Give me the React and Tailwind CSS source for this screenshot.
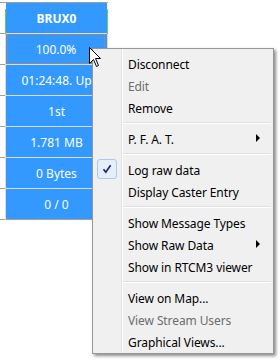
import React from 'react';

const cells = ['BRUX0', '100.0%', '01:24:48. Up', '1st', '1.781 MB', '0 Bytes', '0 / 0'];

const menu = [
  { label: 'Disconnect' },
  { label: 'Edit', disabled: true },
  { label: 'Remove' },
  'sep',
  { label: 'P. F. A. T.', sub: true },
  'sep',
  { label: 'Log raw data', checked: true },
  { label: 'Display Caster Entry' },
  'sep',
  { label: 'Show Message Types' },
  { label: 'Show Raw Data', sub: true },
  { label: 'Show in RTCM3 viewer' },
  'sep',
  { label: 'View on Map...' },
  { label: 'View Stream Users', disabled: true },
  { label: 'Graphical Views...' },
];

const StreamColumn = () => (
  <div className="pt-[2px]">
    <div className="w-[108px] border-t border-[#a0a0a0]">
      {cells.map((text, i) => {
        const last = i === cells.length - 1;
        return (
          <div key={i} className="flex h-[31px]">
            <div className="w-[5px] border-b border-[#a0a0a0]" />
            {i === 0 ? (
              <div className="w-px bg-[linear-gradient(to_bottom,transparent_6px,#5fd35f_6px)]" />
            ) : (
              <div className="w-px bg-[#dcdcdc]" />
            )}
            <div
              className={`w-[101px] bg-[#3399ff] flex text-white ${
                last ? 'border-b border-[#a0a0a0]' : 'border-b border-[#dcdcdc]'
              }`}
            >
              {i === 1 ? (
                <div className="flex-1 ml-[1px] mr-[2px] border border-dotted border-[#f07a1e] flex items-center justify-center pt-[1px]">
                  {text}
                </div>
              ) : (
                <div className={`flex-1 flex items-center justify-center pt-[1px] ${i === 0 ? 'font-bold' : ''}`}>
                  {text}
                </div>
              )}
            </div>
            {i === 0 ? (
              <div className="w-px bg-[linear-gradient(to_bottom,transparent_6px,#5fd35f_6px)]" />
            ) : (
              <div className="w-px bg-[#dcdcdc]" />
            )}
          </div>
        );
      })}
    </div>
  </div>
);

const Check = () => (
  <svg width="10" height="10" viewBox="0 0 10 10">
    <path d="M1.5 5.2 L3.8 8.2 L8.6 1.2" fill="none" stroke="#13217a" strokeWidth="1.6" strokeLinejoin="miter" />
  </svg>
);

const ContextMenu = () => (
  <div className="absolute left-[92px] top-[48px] w-[182px] border border-[#979797] shadow-[2px_2px_3px_rgba(0,0,0,0.45)] bg-[linear-gradient(to_right,#f0f0f0_28px,#e2e3e3_28px,#e2e3e3_29px,#ffffff_29px,#ffffff_30px,#f0f0f0_30px)] pt-[3px] pb-[1px]">
    {menu.map((item, i) =>
      item === 'sep' ? (
        <div key={i} className="h-[9px] flex flex-col justify-center pl-[30px] pr-[2px]">
          <div className="h-px bg-[#e0e0e0]" />
          <div className="h-px bg-white" />
        </div>
      ) : (
        <div
          key={i}
          className={`flex h-[22px] items-center ${item.disabled ? 'text-[#6d6d6d]' : 'text-black'}`}
        >
          <div className="w-[35px] h-full flex items-center pl-[4px]">
            {item.checked && (
              <div className="w-[20px] h-[20px] rounded-[3px] border border-[#a9c9ef] bg-[#e6eefa] flex items-center justify-center">
                <Check />
              </div>
            )}
          </div>
          <div className="flex-1 pt-[3px] tracking-[-0.1px]">{item.label}</div>
          {item.sub && (
            <div className="mr-[13px] w-0 h-0 border-y-[4px] border-y-transparent border-l-[4px] border-l-black" />
          )}
        </div>
      )
    )}
  </div>
);

const Cursor = () => (
  <svg className="absolute left-[89px] top-[47px]" width="13" height="21" viewBox="0 0 13 21">
    <path
      d="M0.5 0.5 L0.5 16.5 L4.5 12.5 L7.5 19.5 L9.5 18.5 L6.5 11.5 L11.5 11.5 Z"
      fill="#ffffff"
      stroke="#000000"
      strokeWidth="1"
    />
  </svg>
);

export default function App() {
  return (
    <div className="relative w-[280px] h-[360px] bg-white overflow-hidden font-['Noto_Sans',sans-serif] text-[12px] leading-none">
      <StreamColumn />
      <ContextMenu />
      <Cursor />
    </div>
  );
}
